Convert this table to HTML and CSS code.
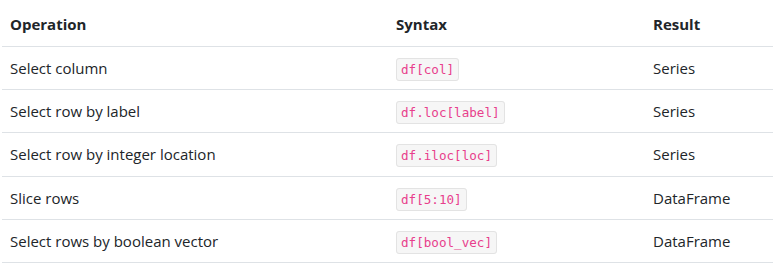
FILE: index.html
```html
<!DOCTYPE html>
<html lang="en">
<head>
<meta charset="utf-8">
<link rel="stylesheet" href="styles.css">
</head>
<body>
<table class="ops">
  <thead>
    <tr><th class="c1">Operation</th><th class="c2">Syntax</th><th class="c3">Result</th></tr>
  </thead>
  <tbody>
    <tr><td>Select column</td><td><code>df[col]</code></td><td>Series</td></tr>
    <tr><td>Select row by label</td><td><code>df.loc[label]</code></td><td>Series</td></tr>
    <tr><td>Select row by integer location</td><td><code>df.iloc[loc]</code></td><td>Series</td></tr>
    <tr><td>Slice rows</td><td><code>df[5:10]</code></td><td>DataFrame</td></tr>
    <tr><td>Select rows by boolean vector</td><td><code>df[bool_vec]</code></td><td>DataFrame</td></tr>
  </tbody>
</table>
</body>
</html>
```
FILE: styles.css
```css
html, body { margin: 0; padding: 0; background: #fff; }
body { padding: 2px 10px 0 2px; font-family: "Open Sans", "Noto Sans", sans-serif; font-size: 15px; color: #212529; }
.ops { width: 771px; border-collapse: collapse; }
.ops th, .ops td { text-align: left; padding: 0 8px; vertical-align: middle; }
.ops th { font-weight: 700; height: 44px; border-bottom: 1px solid #dee2e6; }
.ops td { height: 42.2px; border-bottom: 1px solid #dee2e6; }
.c1 { width: 370px; }
.c2 { width: 241px; }
code { font-family: "DejaVu Sans Mono", monospace; font-size: 12.6px; color: #e83e8c; background: #f6f6f6; border: 1px solid #e3e3e3; border-radius: 3px; padding: 3px 4px; }
```
